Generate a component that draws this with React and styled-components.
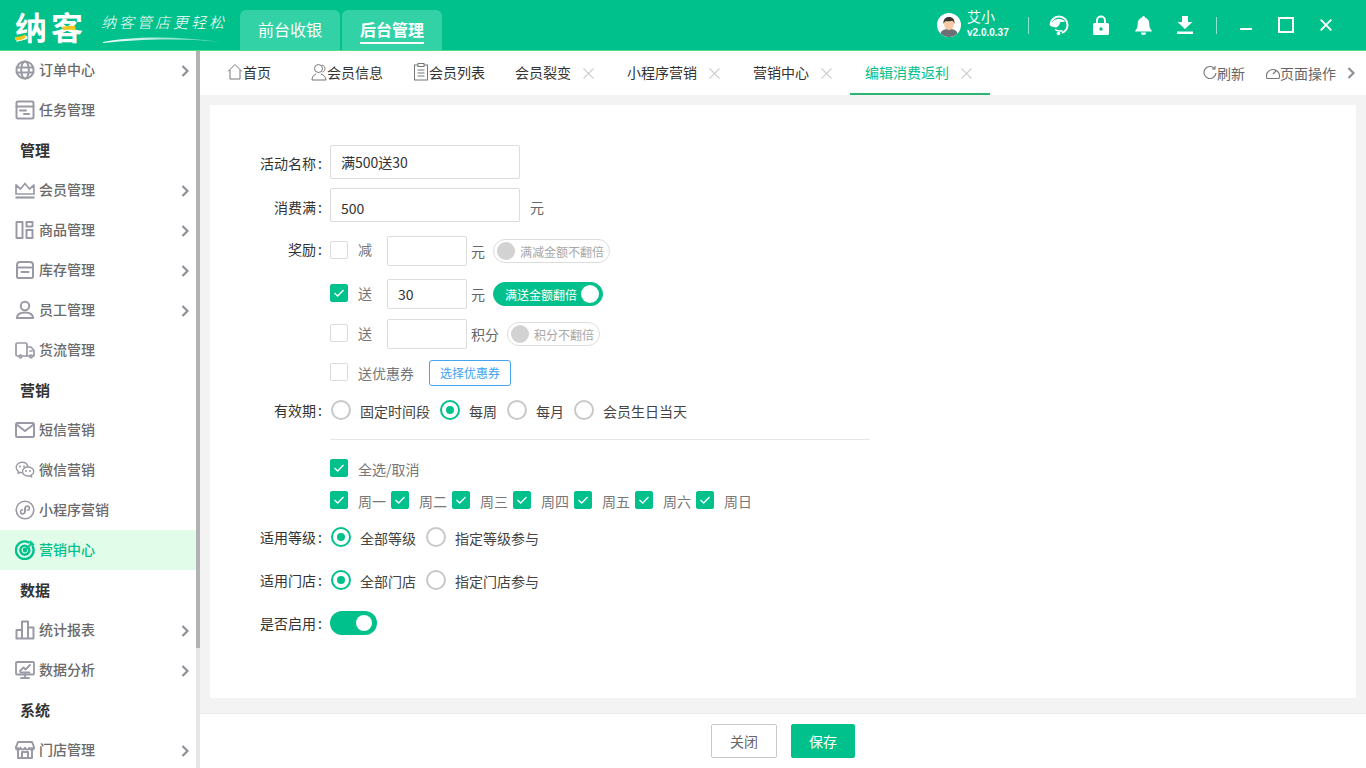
import React from "react";
import styled, { createGlobalStyle } from "styled-components";

const GREEN = "#00c18c";
const FONT = `"Noto Sans CJK SC", "Noto Sans", sans-serif`;

const Global = createGlobalStyle`
  html, body {
    margin: 0;
    height: 100%;
    overflow: hidden;
    font-family: ${FONT};
    font-size: 14px;
    color: #333;
    background: #fff;
  }
  * { box-sizing: border-box; }
`;

const Page = styled.div`
  width: 1366px;
  height: 768px;
  display: flex;
  flex-direction: column;
  overflow: hidden;
`;

/* top bar */
const TopBar = styled.header`
  height: 51px;
  flex: none;
  display: flex;
  align-items: stretch;
  background: ${GREEN};
  border-bottom: 1px solid #4fdc82;
  padding-left: 15px;
`;

const Logo = styled.div`
  position: relative;
  width: 74px;
  margin-right: -2px;
  height: 50px;
  display: flex;
  align-items: center;
  padding-top: 2px;
  font-size: 32px;
  font-weight: 700;
  line-height: 40px;
  color: #fff;
  white-space: nowrap;
  letter-spacing: 4px;
`;

const LogoAccent = styled.svg`
  position: absolute;
  left: 0;
  top: 0;
`;

const Slogan = styled.div`
  position: relative;
  width: 139px;
  margin-left: 14px;
  padding-top: 12px;
  font-size: 15px;
  font-weight: 300;
  font-style: italic;
  line-height: 20px;
  letter-spacing: 3px;
  color: #fff;
  white-space: nowrap;
`;

const Swoosh = styled.svg`
  position: absolute;
  left: 2px;
  top: 36px;
`;

const ModeTabs = styled.div`
  display: flex;
  gap: 2px;
  padding-top: 10px;
`;

const ModeTab = styled.div`
  width: 100px;
  height: 40px;
  padding-bottom: 2px;
  border-radius: 6px 6px 0 0;
  background: #33d1a6;
  color: #fff;
  display: flex;
  align-items: center;
  justify-content: center;
  font-size: 16px;
  font-weight: ${({ $active }) => ($active ? 700 : 400)};
`;

const ModeLabel = styled.span`
  line-height: 24px;
  padding-bottom: 1px;
  border-bottom: ${({ $active }) => ($active ? "2px solid #fff" : "none")};
  margin-top: ${({ $active }) => ($active ? "2px" : "0")};
`;

const TopRight = styled.div`
  margin-left: auto;
  display: flex;
  align-items: center;
  color: #fff;
`;

const UserBlock = styled.div`
  display: flex;
  align-items: center;
  gap: 6px;
  width: 91px;
`;

const UserText = styled.div`
  display: flex;
  flex-direction: column;
`;

const UserName = styled.div`
  font-size: 14px;
  line-height: 14px;
  margin-top: -1px;
  margin-bottom: 3px;
`;

const Version = styled.div`
  font-family: "Liberation Sans", sans-serif;
  font-size: 10px;
  font-weight: 700;
  line-height: 14px;
  white-space: nowrap;
`;

const TopSep = styled.div`
  width: 1px;
  height: 17px;
  background: rgba(255, 255, 255, 0.55);
`;

const TopIcons = styled.div`
  display: flex;
  align-items: center;
  gap: ${({ $gap }) => $gap}px;
  padding: 0 ${({ $right }) => $right}px 0 ${({ $left }) => $left}px;
`;

/* body */
const Body = styled.div`
  flex: 1;
  display: flex;
  min-height: 0;
`;

const Side = styled.aside`
  width: 200px;
  flex: none;
  display: flex;
  overflow: hidden;
`;

const SideList = styled.nav`
  width: 196px;
  flex: none;
  margin-top: -1px;
`;

const SideItem = styled.div`
  height: 40px;
  display: flex;
  align-items: center;
  padding: 0 7px 0 15px;
  gap: 4px;
  font-weight: 500;
  color: ${({ $active }) => ($active ? GREEN : "#6a6a6a")};
  background: ${({ $active }) => ($active ? "#e2fcea" : "transparent")};
`;

const SideText = styled.span`
  line-height: 20px;
  margin-bottom: 2px;
`;

const SideGroup = styled.div`
  height: 40px;
  display: flex;
  align-items: center;
  padding: 0 0 2px 20px;
  font-size: 15px;
  font-weight: 700;
  color: #333;
`;

const SideIcon = styled.span`
  width: 20px;
  height: 20px;
  flex: none;
  display: flex;
  color: ${({ $active }) => ($active ? GREEN : "#9a9aa6")};
`;

const Chevron = styled.svg`
  margin-left: auto;
  margin-top: 1px;
  flex: none;
`;

const ScrollTrack = styled.div`
  width: 4px;
  flex: none;
  background: #e6e6e6;
`;

const ScrollThumb = styled.div`
  height: 597px;
  background: #b2b2b2;
`;

const Main = styled.main`
  flex: 1;
  min-width: 0;
  display: flex;
  flex-direction: column;
`;

const TabBar = styled.div`
  height: 44px;
  flex: none;
  display: flex;
  align-items: stretch;
  padding-left: 12px;
  background: #fff;
`;

const Tab = styled.div`
  display: flex;
  align-items: center;
  height: 44px;
  padding: 0 ${({ $right }) => $right ?? 15}px 0 ${({ $left }) => $left ?? 15}px;
  white-space: nowrap;
  line-height: 20px;
  color: ${({ $active }) => ($active ? GREEN : "#333")};
  border-bottom: 2px solid ${({ $active }) => ($active ? "#2fb573" : "transparent")};
`;

const TabClose = styled.svg`
  margin-left: 12px;
  margin-top: 2px;
`;

const TabTools = styled.div`
  margin-left: auto;
  display: flex;
  align-items: center;
  padding: 0 11px 1px 0;
  color: #666;
`;

const TabTool = styled.div`
  display: flex;
  align-items: center;
  margin-right: ${({ $gap }) => $gap}px;
  white-space: nowrap;
  line-height: 20px;
`;

const Content = styled.div`
  flex: 1;
  min-height: 0;
  background: #f3f3f3;
  padding: 10px 10px 15px;
`;

const Card = styled.section`
  height: 100%;
  background: #fff;
  padding-top: 40px;
`;

/* form */
const Row = styled.div`
  display: flex;
  align-items: center;
  height: ${({ $h }) => $h}px;
  margin-top: ${({ $mt }) => $mt ?? 0}px;
  white-space: nowrap;
  line-height: 20px;
`;

const Label = styled.div`
  width: 112px;
  flex: none;
  margin-right: 8px;
  margin-top: ${({ $dy }) => ($dy ?? 0) * 2}px;
  text-align: right;
  color: #333;
  &::after {
    content: ":";
    margin-left: 2px;
  }
`;

const TextInput = styled.input`
  width: ${({ $w }) => $w}px;
  height: ${({ $h }) => $h}px;
  flex: none;
  padding: ${({ $pt }) => $pt ?? 0}px 10px 0;
  border: 1px solid #dcdcdc;
  border-radius: 2px;
  outline: none;
  font: inherit;
  color: #333;
`;

const Unit = styled.span`
  margin-left: ${({ $ml }) => $ml}px;
  margin-top: ${({ $dy }) => ($dy ?? 0) * 2}px;
  color: #666;
`;

const Box = styled.span`
  width: 18px;
  height: 18px;
  flex: none;
  display: flex;
  align-items: center;
  justify-content: center;
  margin-bottom: 2px;
  border-radius: 2px;
  border: 1px solid ${({ $on }) => ($on ? GREEN : "#dcdcdc")};
  background: ${({ $on }) => ($on ? GREEN : "#fff")};
`;

const BoxText = styled.span`
  margin-left: 10px;
  margin-top: ${({ $dy }) => ($dy ?? 0) * 2}px;
  color: #777;
  width: ${({ $w }) => ($w ? `${$w}px` : "auto")};
`;

const Pill = styled.div`
  height: 24px;
  width: ${({ $w }) => $w}px;
  margin-left: ${({ $ml }) => $ml}px;
  flex: none;
  border-radius: 12px;
  display: flex;
  align-items: center;
  padding: 0 3px;
  font-size: 12px;
  line-height: 16px;
  flex-direction: ${({ $on }) => ($on ? "row-reverse" : "row")};
  justify-content: ${({ $on }) => ($on ? "space-between" : "flex-start")};
  background: ${({ $on }) => ($on ? GREEN : "#fff")};
  color: ${({ $on }) => ($on ? "#fff" : "#a8a8a8")};
  border: 1px solid ${({ $on }) => ($on ? GREEN : "#dcdcdc")};
`;

const PillKnob = styled.span`
  width: 18px;
  height: 18px;
  flex: none;
  border-radius: 50%;
  background: ${({ $on }) => ($on ? "#fff" : "#d2d2d2")};
`;

const PillText = styled.span`
  margin: 1px 0 0 ${({ $on }) => ($on ? "8px" : "5px")};
`;

const CouponBtn = styled.div`
  width: 82px;
  height: 26px;
  margin-left: 15px;
  margin-top: -1px;
  display: flex;
  align-items: center;
  justify-content: center;
  border: 1px solid #45a5f0;
  border-radius: 3px;
  font-size: 12px;
  color: #3ea2f2;
`;

const Radio = styled.span`
  width: 20px;
  height: 20px;
  flex: none;
  border-radius: 50%;
  border: 2px solid ${({ $on }) => ($on ? GREEN : "#c8c8c8")};
  display: flex;
  align-items: center;
  justify-content: center;
  margin-left: ${({ $first }) => ($first ? 1 : 10)}px;
  &::after {
    content: "";
    display: ${({ $on }) => ($on ? "block" : "none")};
    width: 8px;
    height: 8px;
    border-radius: 50%;
    background: ${GREEN};
  }
`;

const RadioText = styled.span`
  margin: 2px 0 0 9px;
  color: #444;
`;

const Divider = styled.div`
  width: 540px;
  height: 1px;
  margin: 17px 0 0 120px;
  background: #e6e6e6;
`;

const Indent = styled.div`
  width: 120px;
  flex: none;
`;

const Week = styled.span`
  display: flex;
  align-items: center;
  width: 61px;
  flex: none;
`;

const Switch = styled.div`
  width: 47px;
  height: 24px;
  border-radius: 12px;
  background: ${GREEN};
  display: flex;
  align-items: center;
  justify-content: flex-end;
  padding-right: 5px;
`;

const SwitchKnob = styled.span`
  width: 16px;
  height: 16px;
  border-radius: 50%;
  background: #fff;
`;

const Footer = styled.footer`
  height: 55px;
  flex: none;
  display: flex;
  justify-content: center;
  gap: 14px;
  padding-top: 10px;
  background: #fff;
  border-top: 1px solid #e8e8e8;
`;

const Btn = styled.div`
  width: ${({ $w }) => $w}px;
  height: 34px;
  display: flex;
  align-items: center;
  justify-content: center;
  border-radius: 2px;
  background: ${({ $primary }) => ($primary ? GREEN : "#fff")};
  color: ${({ $primary }) => ($primary ? "#fff" : "#666")};
  border: 1px solid ${({ $primary }) => ($primary ? GREEN : "#c8c8c8")};
`;

/* drawings */
const Ico = ({ children, w = 20, h = 20, vb, sw = 1.7, fill = "none", stroke = "currentColor" }) => (
  <svg width={w} height={h} viewBox={vb || `0 0 ${w} ${h}`} fill={fill} stroke={stroke} strokeWidth={sw} strokeLinecap="round" strokeLinejoin="round">
    {children}
  </svg>
);

const icons = {
  globe: (
    <Ico sw={2}>
      <circle cx="10" cy="10" r="8.6" />
      <ellipse cx="10" cy="10" rx="3.8" ry="8.6" />
      <path d="M1.6 7.4h16.8M1.6 12.6h16.8" />
    </Ico>
  ),
  task: (
    <Ico sw={2}>
      <rect x="1.5" y="1.5" width="17" height="17" rx="1.5" />
      <path d="M1.5 6.5h17M5 10.5h6M9 14h5" />
    </Ico>
  ),
  crown: (
    <Ico>
      <path d="M1 5v9h18V5l-4.5 4L10 3.5 5.500 9z" fill="none" />
      <path d="M0.500 17.500h19" strokeWidth="2.200" strokeLinecap="butt" />
    </Ico>
  ),
  goods: (
    <Ico sw={2}>
      <rect x="1.500" y="2" width="6" height="16" />
      <rect x="11.500" y="2" width="6" height="4.500" />
      <rect x="11.500" y="10" width="6" height="8" />
    </Ico>
  ),
  stock: (
    <Ico sw={2}>
      <path d="M2 7.500V5a3 3 0 0 1 3-3h10a3 3 0 0 1 3 3v2.500z" />
      <path d="M2 7.500v9a1.500 1.500 0 0 0 1.500 1.500h13a1.500 1.500 0 0 0 1.500-1.500v-9M6.500 12h7" />
    </Ico>
  ),
  staff: (
    <Ico sw={2}>
      <circle cx="10" cy="6" r="4.200" />
      <path d="M1.800 18c.5-3.800 3.500-5.500 8.200-5.500s7.700 1.700 8.200 5.500z" />
    </Ico>
  ),
  truck: (
    <Ico>
      <path d="M4 16H2.500A1.500 1.500 0 0 1 1 14.500v-10A1.500 1.500 0 0 1 2.500 3h8A1.500 1.500 0 0 1 12 4.500V16H7" />
      <path d="M12 7h4l3 3.500V16h-1.500M14 16h-2M15 11h2" />
      <circle cx="5.500" cy="16.500" r="1.300" />
      <circle cx="16" cy="16.500" r="1.300" />
    </Ico>
  ),
  mail: (
    <Ico sw={2}>
      <rect x="1" y="3" width="18" height="14" rx="1.500" />
      <path d="M1.500 4.500L10 11l8.500-6.500" />
    </Ico>
  ),
  wechat: (
    <Ico sw={1.400}>
      <path d="M12.800 6.200C12 3.800 9.800 2.300 7.200 2.300 3.900 2.300 1.200 4.600 1.200 7.500c0 1.700.9 3.100 2.300 4.100l-.6 1.800 2.200-1.100c.6.200 1.200.3 1.800.3" />
      <path d="M13 7c-3 0-5.500 2-5.500 4.500S10 16 13 16c.6 0 1.100-.1 1.700-.2l2 1.100-.5-1.700c1.600-.9 2.600-2.200 2.600-3.700C18.800 9 16.200 7 13 7z" />
      <circle cx="5" cy="6.500" r=".4" />
      <circle cx="9" cy="6.500" r=".4" />
      <circle cx="11" cy="11" r=".4" />
      <circle cx="15" cy="11" r=".4" />
    </Ico>
  ),
  mini: (
    <Ico sw={1.600}>
      <circle cx="10" cy="10" r="8.800" />
      <path d="M9.800 8v3.800a2.100 2.100 0 1 1-2.200-2.100M10.200 12V8.200a2.100 2.100 0 1 1 2.200 2.100" />
    </Ico>
  ),
  target: (
    <Ico sw={2.400}>
      <path d="M13.500 2.300A8.800 8.800 0 1 0 17.700 6.500" />
      <path d="M11.500 6A4.500 4.500 0 1 0 14 8.500" />
      <circle cx="10" cy="10" r="1.200" fill="currentColor" />
      <path d="M10 10l7-7M15.500 1.500v3h3" strokeWidth="1.800" />
    </Ico>
  ),
  chart: (
    <Ico sw={2}>
      <path d="M1.500 18.500h17v-11h-5.500v11M7 18.500V1.500h6v17M7 18.500H1.500v-8.500H7" />
    </Ico>
  ),
  monitor: (
    <Ico sw={1.800}>
      <rect x="1" y="2" width="18" height="12.500" rx="1" />
      <path d="M5 11l3.500-3.500 2 2L15 5M5.500 12.500h9M10 14.500v3M6 18h8" />
    </Ico>
  ),
  store: (
    <Ico sw={2}>
      <path d="M3 8v10h14V8" />
      <path d="M3 2h14l2 5a2.200 2.200 0 0 1-4.500.8 2.300 2.300 0 0 1-4.500 0 2.300 2.300 0 0 1-4.500 0A2.200 2.200 0 0 1 1 7z" />
      <path d="M7 18v-6h6v6" />
    </Ico>
  ),
};

const sideItems = [
  { label: "订单中心", icon: "globe", more: true },
  { label: "任务管理", icon: "task" },
  { group: "管理" },
  { label: "会员管理", icon: "crown", more: true },
  { label: "商品管理", icon: "goods", more: true },
  { label: "库存管理", icon: "stock", more: true },
  { label: "员工管理", icon: "staff", more: true },
  { label: "货流管理", icon: "truck" },
  { group: "营销" },
  { label: "短信营销", icon: "mail" },
  { label: "微信营销", icon: "wechat" },
  { label: "小程序营销", icon: "mini" },
  { label: "营销中心", icon: "target", active: true },
  { group: "数据" },
  { label: "统计报表", icon: "chart", more: true },
  { label: "数据分析", icon: "monitor", more: true },
  { group: "系统" },
  { label: "门店管理", icon: "store", more: true },
];

const Arrow = () => (
  <Chevron width="8" height="12" viewBox="0 0 8 12" fill="none" stroke="#8f8f98" strokeWidth="2.200">
    <path d="M1.500 1l5 5-5 5" />
  </Chevron>
);

const Check = () => (
  <svg width="12" height="10" viewBox="0 0 12 10" fill="none" stroke="#fff" strokeWidth="1.300">
    <path d="M1.500 5l3.200 3L10.500 2" />
  </svg>
);

const CloseX = () => (
  <TabClose width="11" height="11" viewBox="0 0 11 11" stroke="#cfcfcf" strokeWidth="1.200">
    <path d="M.5.500l10 10M10.500.500l-10 10" />
  </TabClose>
);

const TabIcon = ({ children, w = 16 }) => (
  <svg width={w} height="18" viewBox={`0 0 ${w} 18`} fill="none" stroke="#777" strokeWidth="1">
    {children}
  </svg>
);

const Avatar = () => (
  <svg width="24" height="24" viewBox="0 0 24 24">
    <circle cx="12" cy="12" r="12" fill="#fff" />
    <path d="M3.500 20.500c1-3.500 4-4.500 8.500-4.500s7.500 1 8.500 4.500A12 12 0 0 1 3.500 20.500z" fill="#6a7076" />
    <ellipse cx="12" cy="11" rx="5" ry="6" fill="#f6c9a4" />
    <path d="M6.500 11c-.5-4.500 2-7 5.500-7s6 2.500 5.500 7c-.5-2-1.500-3-2.500-3.300-2 .8-4.500.8-6 .3-1 .5-2 1.300-2.500 3z" fill="#3a3533" />
  </svg>
);

const Support = () => (
  <svg width="20" height="22" viewBox="0 0 20 22" fill="none">
    <path d="M1.500 11a8.500 8.500 0 1 1 17 0c0 3.500-2.200 6.500-5.500 7.800" stroke="#fff" strokeWidth="2" />
    <path d="M1 11c0-1.800 1-2.800 2.500-2.800 .8-2 3.200-3.200 6.500-3.200 3 0 5 1 6 2.600-1.500.6-3 .6-4.500.2-.5 2.300-2 4.500-4 5.700-1.500 0-2.800-.3-3.500-.8C2 12.700 1 12.300 1 11z" fill="#fff" />
    <path d="M6 15.500c2 1.500 5 1.800 7.500 1.200" stroke="#fff" strokeWidth="1.500" />
    <circle cx="9.500" cy="19.500" r="1.800" fill="#fff" />
  </svg>
);

const Lock = () => (
  <svg width="16" height="20" viewBox="0 0 16 20" fill="none">
    <path d="M4 8.500V5.500a4 4 0 0 1 8 0v3" stroke="#fff" strokeWidth="2" />
    <path fillRule="evenodd" d="M1.500 8h13A1.500 1.500 0 0 1 16 9.500v9a1.500 1.500 0 0 1-1.500 1.500h-13A1.500 1.500 0 0 1 0 18.500v-9A1.500 1.500 0 0 1 1.500 8zM8 12.300a1.700 1.700 0 1 0 0 3.400 1.700 1.700 0 0 0 0-3.400z" fill="#fff" />
  </svg>
);

const Bell = () => (
  <svg width="19" height="19" viewBox="-2 0 19 19" fill="#fff">
    <path d="M8.500 0A1.500 1.500 0 0 1 10 1.500C13 2.300 14.300 5 14.300 8c0 3 .7 4.800 2.400 6.500v1H.3v-1C2 12.800 2.700 11 2.700 8c0-3 1.300-5.700 4.300-6.500A1.500 1.500 0 0 1 8.500 0z" />
    <path d="M6 16.500h5a2.500 2.500 0 0 1-5 0z" />
  </svg>
);

const Download = () => (
  <svg width="17" height="18" viewBox="-1 0 17 18" fill="#fff">
    <path d="M5 0h6v6h4.500L8 13 .5 6H5z" />
    <rect x="0" y="15.500" width="16" height="2.500" />
  </svg>
);

const WinMin = () => (
  <svg width="12" height="14" viewBox="0 0 12 14" fill="#fff">
    <rect y="10" width="12" height="2" />
  </svg>
);

const WinMax = () => (
  <svg width="16" height="16" viewBox="0 0 16 16" fill="none" stroke="#fff" strokeWidth="2">
    <rect x="1" y="1" width="14" height="14" />
  </svg>
);

const WinClose = () => (
  <svg width="12" height="12" viewBox="0 0 12 12" fill="none" stroke="#fff" strokeWidth="1.800">
    <path d="M.700.700l10.600 10.600M11.300.700L.700 11.300" />
  </svg>
);

const Tick = ({ on, text, w, dy }) => (
  <>
    <Box $on={on}>{on && <Check />}</Box>
    <BoxText $w={w} $dy={dy}>{text}</BoxText>
  </>
);

const RadioGroup = ({ options, active }) =>
  options.map((o, i) => (
    <React.Fragment key={o}>
      <Radio $first={i === 0} $on={i === active} />
      <RadioText>{o}</RadioText>
    </React.Fragment>
  ));

const weekDays = ["周一", "周二", "周三", "周四", "周五", "周六", "周日"];

export default function App() {
  return (
    <Page>
      <Global />
      <TopBar>
        <Logo>
          纳客
          <LogoAccent width="74" height="50" viewBox="0 0 74 50" fill="#f5c518">
            <path d="M0 37c4 0 8-1 11-3l-1 4c-3 2-7 3-10 2zM47 27c4-.5 8-1.500 13-1l1 4c-5-.5-9-.5-13 0z" />
          </LogoAccent>
        </Logo>
        <Slogan>
          纳客管店更轻松
          <Swoosh width="118" height="7" viewBox="0 0 118 7">
            <defs>
              <linearGradient id="swoosh">
                <stop offset="0" stopColor="#fff" />
                <stop offset="1" stopColor="#fff" stopOpacity=".3" />
              </linearGradient>
            </defs>
            <path d="M0 6C30 0 75 0 118 6 80 2 35 3 0 7z" fill="url(#swoosh)" />
          </Swoosh>
        </Slogan>
        <ModeTabs>
          <ModeTab>
            <ModeLabel>前台收银</ModeLabel>
          </ModeTab>
          <ModeTab $active>
            <ModeLabel $active>后台管理</ModeLabel>
          </ModeTab>
        </ModeTabs>
        <TopRight>
          <UserBlock>
            <Avatar />
            <UserText>
              <UserName>艾小</UserName>
              <Version>v2.0.0.37</Version>
            </UserText>
          </UserBlock>
          <TopSep />
          <TopIcons $gap={24} $left={20} $right={23}>
            <Support />
            <Lock />
            <Bell />
            <Download />
          </TopIcons>
          <TopSep />
          <TopIcons $gap={26} $left={23} $right={34}>
            <WinMin />
            <WinMax />
            <WinClose />
          </TopIcons>
        </TopRight>
      </TopBar>

      <Body>
        <Side>
          <SideList>
            {sideItems.map((item, i) =>
              item.group ? (
                <SideGroup key={i}>{item.group}</SideGroup>
              ) : (
                <SideItem key={i} $active={item.active}>
                  <SideIcon $active={item.active}>{icons[item.icon]}</SideIcon>
                  <SideText>{item.label}</SideText>
                  {item.more && <Arrow />}
                </SideItem>
              )
            )}
          </SideList>
          <ScrollTrack>
            <ScrollThumb />
          </ScrollTrack>
        </Side>

        <Main>
          <TabBar>
            <Tab>
              <TabIcon>
                <path d="M1 8.500L8 1.500l7 7M3 7v9h10V7" />
              </TabIcon>
              首页
            </Tab>
            <Tab $left={25}>
              <TabIcon>
                <circle cx="7.500" cy="5.500" r="4" />
                <path d="M1 17c0-3 1.500-5 4-6M10 11c3 1 4.500 3 5 6H1M11 2c2 .5 3 2 3 3.500S13 8.500 11.500 9" />
              </TabIcon>
              会员信息
            </Tab>
            <Tab $left={16}>
              <TabIcon w={15}>
                <rect x=".5" y="2" width="13" height="15" />
                <rect x="4" y=".5" width="6" height="3" fill="#fff" />
                <path d="M3.500 7h7M3.500 10h7M3.500 13h7" />
              </TabIcon>
              会员列表
            </Tab>
            <Tab $right={18}>
              会员裂变
              <CloseX />
            </Tab>
            <Tab $right={18}>
              小程序营销
              <CloseX />
            </Tab>
            <Tab $right={18}>
              营销中心
              <CloseX />
            </Tab>
            <Tab $active $right={18}>
              编辑消费返利
              <CloseX />
            </Tab>
            <TabTools>
              <TabTool $gap={21}>
                <svg width="14" height="16" viewBox="0 0 14 16" fill="none" stroke="#777" strokeWidth="1.100">
                  <path d="M11.500 3.500A6 6 0 1 0 13 8M12 1v3H9" />
                </svg>
                刷新
              </TabTool>
              <TabTool $gap={11}>
                <svg width="14" height="16" viewBox="0 0 14 16" fill="none" stroke="#777" strokeWidth="1.100">
                  <path d="M1 13.500a6.500 6.500 0 1 1 12 0zM7 9l3-3" />
                </svg>
                页面操作
              </TabTool>
              <Arrow />
            </TabTools>
          </TabBar>

          <Content>
            <Card>
              <Row $h={34}>
                <Label $dy={1}>活动名称</Label>
                <TextInput $w={190} $h={34} readOnly value="满500送30" />
              </Row>
              <Row $h={34} $mt={9}>
                <Label $dy={2}>消费满</Label>
                <TextInput $w={190} $h={34} $pt={5} readOnly value="500" />
                <Unit $ml={10} $dy={2}>元</Unit>
              </Row>
              <Row $h={30} $mt={14}>
                <Label $dy={-2}>奖励</Label>
                <Tick text="减" w={29} dy={-2} />
                <TextInput $w={80} $h={30} readOnly value="" />
                <Unit $ml={4}>元</Unit>
                <Pill $w={117} $ml={8}>
                  <PillKnob />
                  <PillText>满减金额不翻倍</PillText>
                </Pill>
              </Row>
              <Row $h={30} $mt={13}>
                <Indent />
                <Tick on text="送" w={29} dy={-1} />
                <TextInput $w={80} $h={30} readOnly value="30" />
                <Unit $ml={4}>元</Unit>
                <Pill $on $w={110} $ml={8}>
                  <PillKnob $on />
                  <PillText $on>满送金额翻倍</PillText>
                </Pill>
              </Row>
              <Row $h={30} $mt={10}>
                <Indent />
                <Tick text="送" w={29} dy={-1} />
                <TextInput $w={80} $h={30} readOnly value="" />
                <Unit $ml={4}>积分</Unit>
                <Pill $w={93} $ml={8}>
                  <PillKnob />
                  <PillText>积分不翻倍</PillText>
                </Pill>
              </Row>
              <Row $h={26} $mt={11}>
                <Indent />
                <Tick text="送优惠券" />
                <CouponBtn>选择优惠券</CouponBtn>
              </Row>
              <Row $h={24} $mt={12}>
                <Label>有效期</Label>
                <RadioGroup options={["固定时间段", "每周", "每月", "会员生日当天"]} active={1} />
              </Row>
              <Divider />
              <Row $h={24} $mt={17}>
                <Indent />
                <Tick on text="全选/取消" />
              </Row>
              <Row $h={24} $mt={8}>
                <Indent />
                {weekDays.map((d) => (
                  <Week key={d}>
                    <Tick on text={d} />
                  </Week>
                ))}
              </Row>
              <Row $h={24} $mt={12}>
                <Label>适用等级</Label>
                <RadioGroup options={["全部等级", "指定等级参与"]} active={0} />
              </Row>
              <Row $h={24} $mt={19}>
                <Label>适用门店</Label>
                <RadioGroup options={["全部门店", "指定门店参与"]} active={0} />
              </Row>
              <Row $h={24} $mt={19}>
                <Label>是否启用</Label>
                <Switch>
                  <SwitchKnob />
                </Switch>
              </Row>
            </Card>
          </Content>

          <Footer>
            <Btn $w={66}>关闭</Btn>
            <Btn $w={64} $primary>
              保存
            </Btn>
          </Footer>
        </Main>
      </Body>
    </Page>
  );
}
